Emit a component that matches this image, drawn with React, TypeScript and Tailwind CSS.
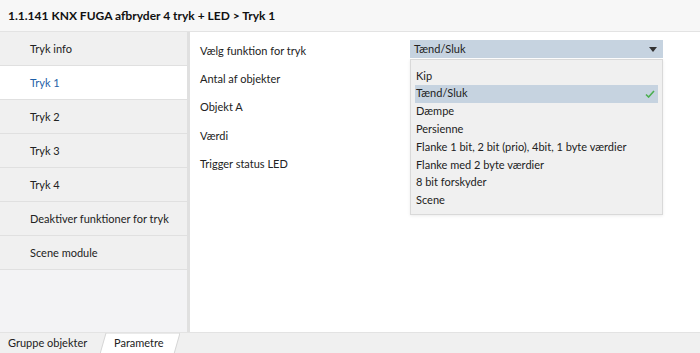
import React from "react";

const menu = ["Tryk info", "Tryk 1", "Tryk 2", "Tryk 3", "Tryk 4", "Deaktiver funktioner for tryk", "Scene module"];
const labels = ["Vælg funktion for tryk", "Antal af objekter", "Objekt A", "Værdi", "Trigger status LED"];
const options = [
  "Kip",
  "Tænd/Sluk",
  "Dæmpe",
  "Persienne",
  "Flanke 1 bit, 2 bit (prio), 4bit, 1 byte værdier",
  "Flanke med 2 byte værdier",
  "8 bit forskyder",
  "Scene",
];

export default function App() {
  return (
    <div
      className="w-[700px] h-[353px] flex flex-col bg-white text-[11px] text-[#222] overflow-hidden whitespace-nowrap"
      style={{ fontFamily: 'Lato, "Noto Sans", sans-serif' }}
    >
      {/* Title bar */}
      <div className="h-[32px] shrink-0 flex items-center px-2 bg-[#f7f7f7] border-b border-[#e3e3e3]">
        <span className="text-[12px] font-bold text-[#111]">1.1.141 KNX FUGA afbryder 4 tryk + LED &gt; Tryk 1</span>
      </div>

      <div className="flex flex-1 min-h-0">
        {/* Sidebar */}
        <div className="w-[187px] shrink-0 flex flex-col bg-[#f3f3f5]">
          {menu.map((m) => {
            const active = m === "Tryk 1";
            return (
              <div
                key={m}
                className={`h-[34px] flex items-center pl-[30px] pt-[2px] border-b border-[#e0e0e0] ${
                  active ? "bg-white text-[#1e5fa8]" : "bg-[#f0f0f0]"
                }`}
              >
                {m}
              </div>
            );
          })}
        </div>
        <div className="w-[3px] shrink-0 bg-[#e0e0e0]" />

        {/* Parameters */}
        <div className="flex-1 relative pl-[10px] pt-[5px]">
          <div className="flex flex-col">
            {labels.map((l) => (
              <div key={l} className="h-[28.3px] flex items-center">
                {l}
              </div>
            ))}
          </div>

          {/* Dropdown */}
          <div className="absolute left-[220px] top-[8px] w-[253px]">
            <div className="h-[18px] flex items-center justify-between pl-[4px] pr-[6px] bg-[#c6d3e0]">
              <span>Tænd/Sluk</span>
              <svg width="8" height="5" viewBox="0 0 8 5">
                <path d="M0 0h8L4 5z" fill="#333" />
              </svg>
            </div>
            <div className="mt-[1px] bg-[#f0f0f0] border border-[#d9d9d9] pt-[7px] pb-[5px] px-[4px] shadow-[0_1px_3px_rgba(0,0,0,0.08)]">
              {options.map((o) => {
                const sel = o === "Tænd/Sluk";
                return (
                  <div
                    key={o}
                    className={`h-[17.8px] flex items-center justify-between pl-[1px] pr-[3px] ${sel ? "bg-[#c6d3e0]" : ""}`}
                  >
                    <span>{o}</span>
                    {sel && (
                      <svg width="10" height="8" viewBox="0 0 10 8">
                        <path d="M1 4.5l2.6 2.5L9 1" stroke="#4caf50" strokeWidth="1.6" fill="none" />
                      </svg>
                    )}
                  </div>
                );
              })}
            </div>
          </div>
        </div>
      </div>

      {/* Bottom tabs */}
      <div className="h-[21px] shrink-0 flex items-end bg-[#f0f0f0] border-t border-[#e3e3e3] relative">
        <div className="h-full flex items-center pl-[8px] w-[100px]">Gruppe objekter</div>
        <div className="relative h-full w-[80px] flex items-center pl-[14px]">
          <svg className="absolute inset-0" width="80" height="21" viewBox="0 0 80 21">
            <path d="M0 21L6 0h74l-6 21z" fill="#fff" stroke="#d6d6d6" strokeWidth="1" />
          </svg>
          <span className="relative">Parametre</span>
        </div>
      </div>
    </div>
  );
}
